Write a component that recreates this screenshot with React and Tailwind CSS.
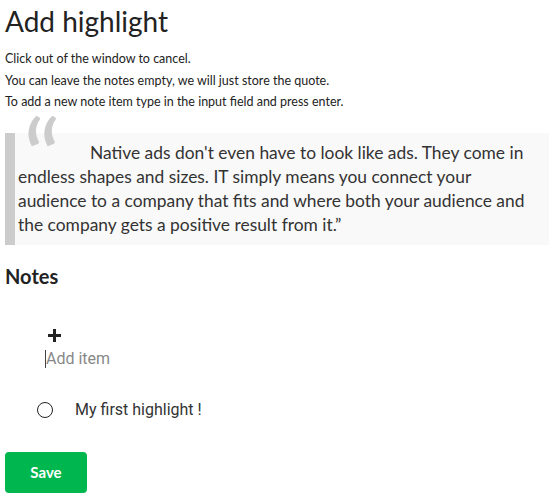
export default function App() {
  return (
    <div className="bg-white min-h-[500px] px-[5px] text-[#222] font-['Lato','Liberation_Sans',sans-serif]">
      <h1 className="text-[28px] leading-[34px] pt-[4px] text-[#222]">Add highlight</h1>
      <div className="mt-[10px] text-[12.5px] leading-[21.5px] text-[#222]">
        <p>Click out of the window to cancel.</p>
        <p>You can leave the notes empty, we will just store the quote.</p>
        <p>To add a new note item type in the input field and press enter.</p>
      </div>

      <blockquote className="relative mt-[20px] mr-[3px] border-l-[10px] border-[#ccc] bg-[#f9f9f9] pl-[3px] py-[8px] text-[17.4px] leading-[24px] text-[#333]">
        <span className="absolute left-[8px] top-[-29px] text-[104px] leading-[104px] text-[#ccc] select-none">
          “
        </span>
        <p className="relative indent-[72px] max-w-[514px]">
          Native ads don't even have to look like ads. They come in endless shapes and sizes. IT simply means you connect your audience to a company that fits and where both your audience and the company gets a positive result from it.”
        </p>
      </blockquote>

      <h2 className="mt-[17px] text-[20px] leading-[28px] font-bold text-[#222]">Notes</h2>

      <div className="mt-[39px] pl-[40px] font-['Roboto',sans-serif]">
        <div className="pl-[3px]">
          <svg width="13" height="13" viewBox="0 0 13 13" className="block">
            <rect x="5" y="0" width="3" height="13" fill="#222" />
            <rect x="0" y="5" width="13" height="3" fill="#222" />
          </svg>
        </div>
        <div className="mt-[7px] flex items-center h-[20px]">
          <span className="w-px h-[18px] bg-[#444]" />
          <span className="text-[16px] text-[#888]">Add item</span>
        </div>
      </div>

      <div className="mt-[29px] flex items-center pl-[32px] font-['Roboto',sans-serif]">
        <span className="w-[16px] h-[16px] rounded-full border-[1.5px] border-[#222]" />
        <span className="ml-[22px] text-[16px] text-[#333]">My first highlight !</span>
      </div>

      <button className="mt-[30px] w-[82px] h-[41px] rounded-[4px] bg-[#00b64f] text-white text-[15px] font-bold">
        Save
      </button>
    </div>
  );
}
